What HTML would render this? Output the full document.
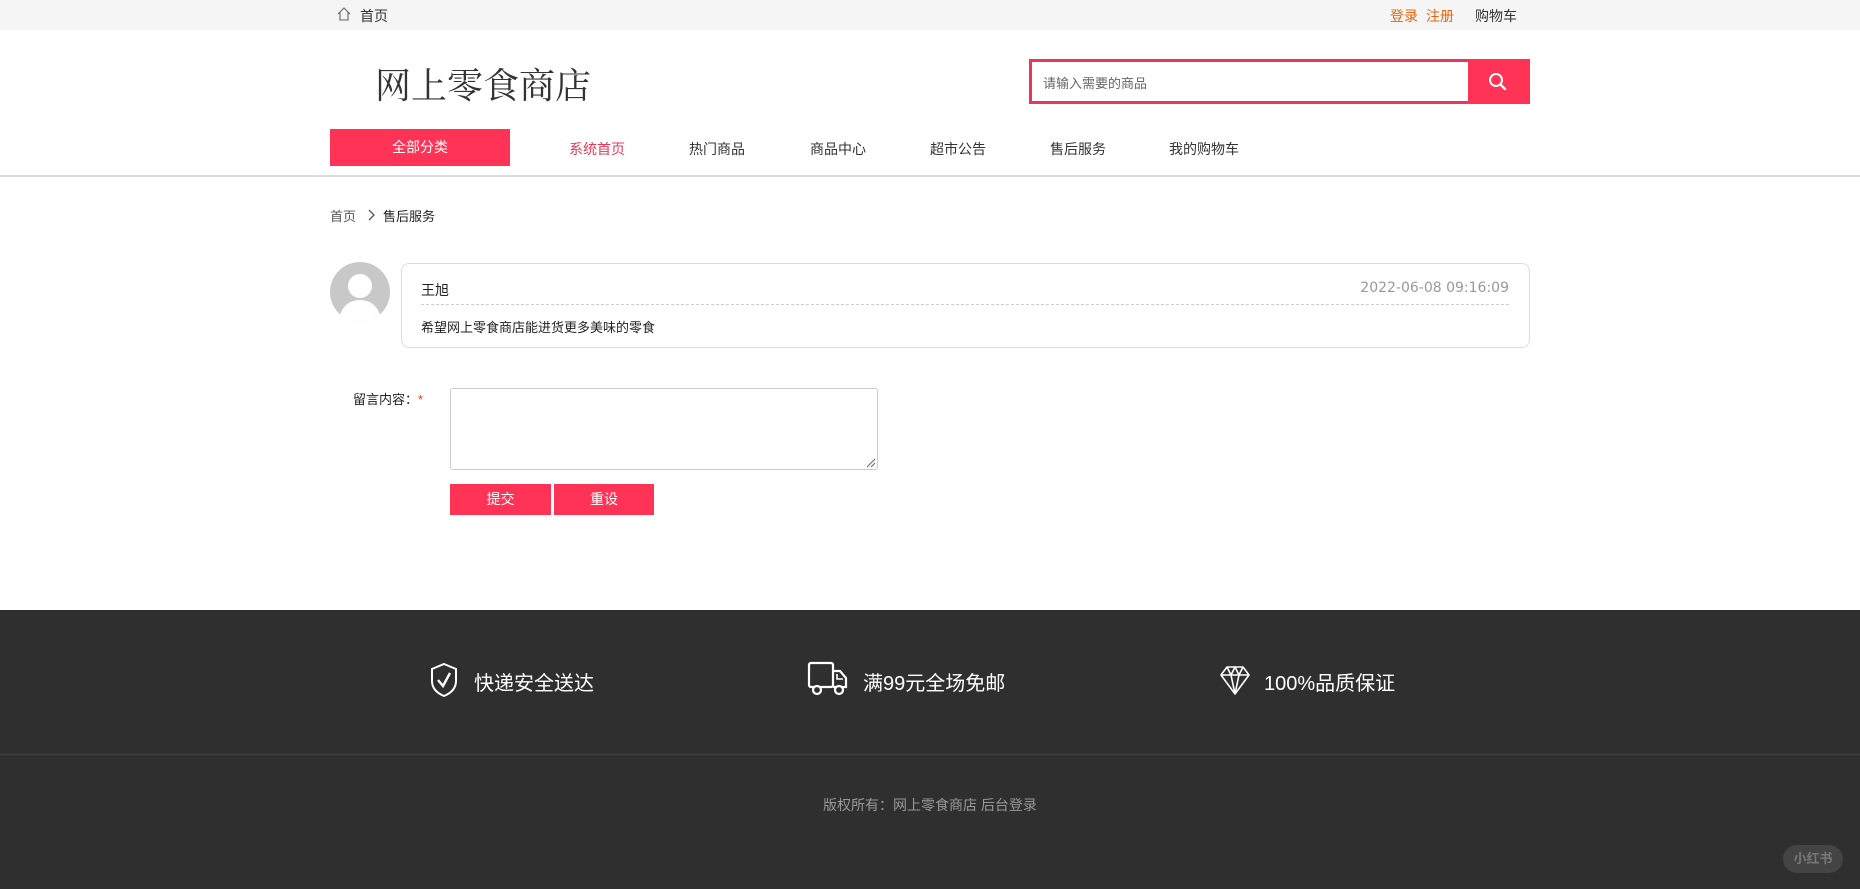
<!DOCTYPE html>
<html><head><meta charset="utf-8"><style>
*{margin:0;padding:0;box-sizing:border-box}
body{width:1860px;height:889px;overflow:hidden;background:#fff;font-family:"Liberation Sans","Noto Sans CJK SC",sans-serif;font-size:14px;color:#333;position:relative}
.a{position:absolute;white-space:nowrap}
</style></head><body>
<div class="a" style="left:0;top:0;width:1860px;height:30px;background:#f5f5f5"></div>
<svg class="a" style="left:337px;top:7px" width="14" height="14" viewBox="0 0 14 14"><path d="M1 7 L7 1 L13 7 M3 5.5 V13 H11 V5.5" fill="none" stroke="#666" stroke-width="1.1"/></svg>
<div class="a" style="left:360px;top:6px;color:#333">首页</div>
<div class="a" style="left:1390px;top:6px;color:#e8650e">登录</div>
<div class="a" style="left:1426px;top:6px;color:#e8650e">注册</div>
<div class="a" style="left:1475px;top:6px;color:#333">购物车</div>

<div class="a" style="left:375px;top:58px;font-family:'Liberation Serif','Noto Serif CJK SC',serif;font-size:36px;color:#333">网上零食商店</div>
<div class="a" style="left:1029px;top:59px;width:501px;height:45px;border:3px solid #e8375a;background:#fff"></div>
<div class="a" style="left:1043px;top:73px;font-size:13px;color:#666">请输入需要的商品</div>
<div class="a" style="left:1468px;top:59px;width:62px;height:45px;background:#ff3355"></div>
<svg class="a" style="left:1488px;top:72px" width="20" height="20" viewBox="0 0 20 20"><circle cx="8" cy="8" r="6" fill="none" stroke="#fff" stroke-width="2"/><path d="M12.5 12.5 L17 17" stroke="#fff" stroke-width="2.4" stroke-linecap="round"/></svg>

<div class="a" style="left:330px;top:129px;width:180px;height:37px;background:#ff3355;color:#fff;text-align:center;line-height:37px">全部分类</div>
<div class="a" style="left:569px;top:139px;color:#e8375a">系统首页</div>
<div class="a" style="left:689px;top:139px">热门商品</div>
<div class="a" style="left:810px;top:139px">商品中心</div>
<div class="a" style="left:930px;top:139px">超市公告</div>
<div class="a" style="left:1050px;top:139px">售后服务</div>
<div class="a" style="left:1169px;top:139px">我的购物车</div>
<div class="a" style="left:0;top:175px;width:1860px;height:2px;background:#ddd"></div>

<div class="a" style="left:330px;top:206px;font-size:13px;color:#555">首页</div>
<svg class="a" style="left:366px;top:208px" width="10" height="14" viewBox="0 0 10 14"><path d="M3 2 L8 7 L3 12" fill="none" stroke="#555" stroke-width="1.3"/></svg>
<div class="a" style="left:383px;top:206px;font-size:13px;color:#222">售后服务</div>

<svg class="a" style="left:330px;top:262px" width="60" height="60" viewBox="0 0 60 60"><defs><clipPath id="c"><circle cx="30" cy="30" r="30"/></clipPath></defs><circle cx="30" cy="30" r="30" fill="#c8c8c8"/><g clip-path="url(#c)" fill="#fff"><circle cx="30" cy="24" r="12"/><path d="M8 60 Q12 38 30 38 Q48 38 52 60 Z"/></g></svg>
<div class="a" style="left:401px;top:263px;width:1129px;height:85px;border:1px solid #ddd;border-radius:8px"></div>
<div class="a" style="left:421px;top:280px;font-size:14px;color:#222">王旭</div>
<div class="a" style="left:1309px;top:280px;width:200px;text-align:right;color:#999;font-size:14px;font-family:'DejaVu Sans',sans-serif">2022-06-08 09:16:09</div>
<div class="a" style="left:421px;top:304px;width:1088px;border-top:1px dashed #ccc"></div>
<div class="a" style="left:421px;top:317px;font-size:13px;color:#222">希望网上零食商店能进货更多美味的零食</div>

<div class="a" style="left:353px;top:389px;font-size:13px;color:#222">留言内容：<span style="color:#e8400e">*</span></div>
<div class="a" style="left:450px;top:388px;width:428px;height:82px;border:1px solid #ccc;border-radius:3px"></div>
<svg class="a" style="left:866px;top:458px" width="10" height="10" viewBox="0 0 10 10"><path d="M1 9 L9 1 M5 9 L9 5" stroke="#666" stroke-width="1"/></svg>
<div class="a" style="left:450px;top:484px;width:101px;height:31px;background:#ff3355;color:#fff;text-align:center;line-height:31px">提交</div>
<div class="a" style="left:554px;top:484px;width:100px;height:31px;background:#ff3355;color:#fff;text-align:center;line-height:31px">重设</div>

<div class="a" style="left:0;top:610px;width:1860px;height:279px;background:#2f2f2f"></div>
<svg class="a" style="left:429px;top:662px" width="30" height="36" viewBox="0 0 30 36"><path d="M15 2 L27 7 V19 Q27 29 15 34 Q3 29 3 19 V7 Z" fill="none" stroke="#fff" stroke-width="2"/><path d="M9 18 L14 24 L21 11" fill="none" stroke="#fff" stroke-width="2.4"/></svg>
<div class="a" style="left:474px;top:667px;font-size:20px;color:#fff">快递安全送达</div>
<svg class="a" style="left:807px;top:661px" width="42" height="36" viewBox="0 0 42 36"><rect x="2" y="2" width="24" height="24" rx="2" fill="none" stroke="#fff" stroke-width="2.2"/><path d="M26 10 H33 L39 17 V26 H26" fill="none" stroke="#fff" stroke-width="2.2"/><path d="M30 13 V18 H36" fill="none" stroke="#fff" stroke-width="1.6"/><circle cx="10" cy="29" r="4" fill="#2f2f2f" stroke="#fff" stroke-width="2.2"/><circle cx="32" cy="29" r="4" fill="#2f2f2f" stroke="#fff" stroke-width="2.2"/></svg>
<div class="a" style="left:863px;top:667px;font-size:20px;color:#fff">满99元全场免邮</div>
<svg class="a" style="left:1219px;top:664px" width="32" height="32" viewBox="0 0 32 32"><path d="M8 3 H24 L30 11 L16 30 L2 11 Z M2 11 H30 M8 3 L12 11 L16 30 L20 11 L24 3 M12 11 L16 3 L20 11" fill="none" stroke="#fff" stroke-width="1.6" stroke-linejoin="round"/></svg>
<div class="a" style="left:1264px;top:667px;font-size:20px;color:#fff">100%品质保证</div>
<div class="a" style="left:0;top:754px;width:1860px;height:1px;background:#424242"></div>
<div class="a" style="left:0;top:795px;width:1860px;text-align:center;font-size:14px;color:#999">版权所有：网上零食商店 后台登录</div>
<div class="a" style="left:1783px;top:845px;width:60px;height:28px;border-radius:14px;background:#444;color:#777;font-size:13px;font-weight:bold;text-align:center;line-height:28px">小红书</div>
</body></html>
